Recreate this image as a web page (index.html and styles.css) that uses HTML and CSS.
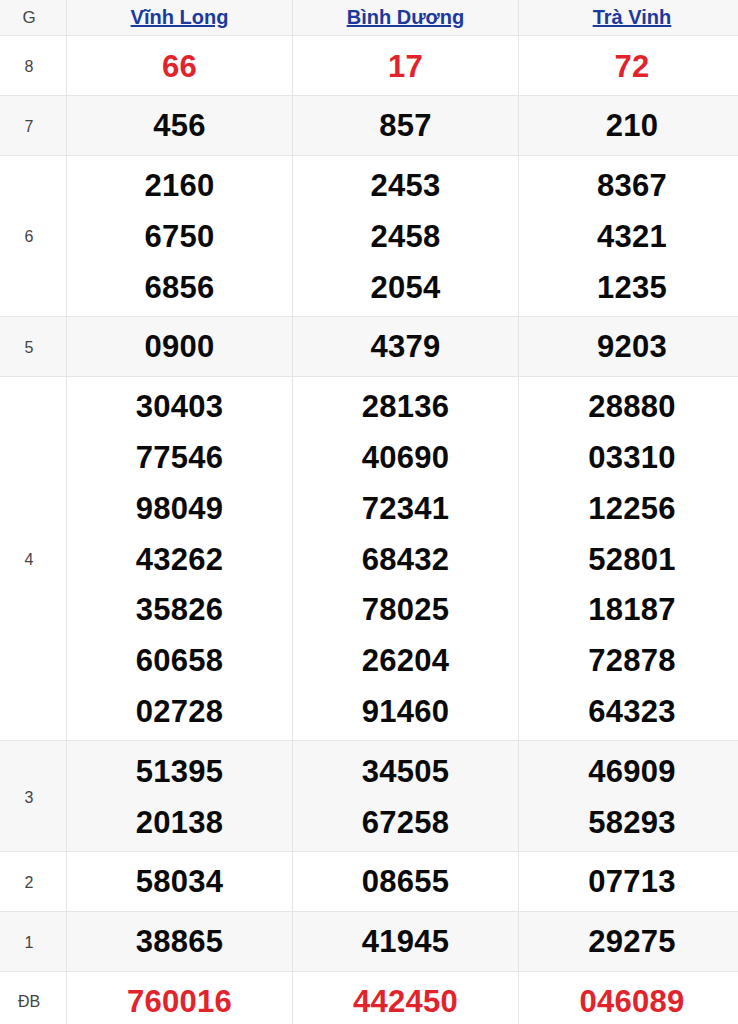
FILE: index.html
```html
<!DOCTYPE html>
<html lang="vi">
<head>
<meta charset="utf-8">
<title>Kết quả xổ số</title>
<link rel="stylesheet" href="styles.css">
</head>
<body>
<div class="board">
  <div class="row head">
    <div class="lbl">G</div>
    <div class="cell"><a href="#">Vĩnh Long</a></div>
    <div class="cell"><a href="#">Bình Dương</a></div>
    <div class="cell last"><a href="#">Trà Vinh</a></div>
  </div>
  <div class="row">
    <div class="lbl">8</div>
    <div class="cell red"><span>66</span></div>
    <div class="cell red"><span>17</span></div>
    <div class="cell red last"><span>72</span></div>
  </div>
  <div class="row alt">
    <div class="lbl">7</div>
    <div class="cell"><span>456</span></div>
    <div class="cell"><span>857</span></div>
    <div class="cell last"><span>210</span></div>
  </div>
  <div class="row">
    <div class="lbl">6</div>
    <div class="cell"><span>2160</span><span>6750</span><span>6856</span></div>
    <div class="cell"><span>2453</span><span>2458</span><span>2054</span></div>
    <div class="cell last"><span>8367</span><span>4321</span><span>1235</span></div>
  </div>
  <div class="row alt">
    <div class="lbl">5</div>
    <div class="cell"><span>0900</span></div>
    <div class="cell"><span>4379</span></div>
    <div class="cell last"><span>9203</span></div>
  </div>
  <div class="row">
    <div class="lbl">4</div>
    <div class="cell"><span>30403</span><span>77546</span><span>98049</span><span>43262</span><span>35826</span><span>60658</span><span>02728</span></div>
    <div class="cell"><span>28136</span><span>40690</span><span>72341</span><span>68432</span><span>78025</span><span>26204</span><span>91460</span></div>
    <div class="cell last"><span>28880</span><span>03310</span><span>12256</span><span>52801</span><span>18187</span><span>72878</span><span>64323</span></div>
  </div>
  <div class="row alt">
    <div class="lbl">3</div>
    <div class="cell"><span>51395</span><span>20138</span></div>
    <div class="cell"><span>34505</span><span>67258</span></div>
    <div class="cell last"><span>46909</span><span>58293</span></div>
  </div>
  <div class="row">
    <div class="lbl">2</div>
    <div class="cell"><span>58034</span></div>
    <div class="cell"><span>08655</span></div>
    <div class="cell last"><span>07713</span></div>
  </div>
  <div class="row alt">
    <div class="lbl">1</div>
    <div class="cell"><span>38865</span></div>
    <div class="cell"><span>41945</span></div>
    <div class="cell last"><span>29275</span></div>
  </div>
  <div class="row">
    <div class="lbl">ĐB</div>
    <div class="cell red"><span>760016</span></div>
    <div class="cell red"><span>442450</span></div>
    <div class="cell red last"><span>046089</span></div>
  </div>
</div>
</body>
</html>
```

FILE: styles.css
```css
html, body {
  margin: 0;
  padding: 0;
  background: #ffffff;
  overflow: hidden;
}
body {
  font-family: "Liberation Sans", Arial, sans-serif;
  color: #111;
  width: 738px;
}
.board {
  display: flex;
  flex-direction: column;
}
.row {
  display: grid;
  grid-template-columns: 67px 226px 226px 219px;
  border-bottom: 1px solid #e5e5e5;
  background: #ffffff;
}
.row.alt, .row.head {
  background: #f7f7f7;
}
.lbl {
  display: flex;
  align-items: center;
  justify-content: center;
  padding: 3px 8px 0 0;
  font-size: 16px;
  color: #444;
  border-right: 1px solid #e5e5e5;
}
.cell {
  display: flex;
  flex-direction: column;
  align-items: center;
  justify-content: center;
  padding: 5.5px 0 2.5px 0;
  border-right: 1px solid #e5e5e5;
}
.cell.last {
  border-right: none;
  padding-left: 7px;
}
.cell span {
  display: block;
  font-size: 31px;
  font-weight: bold;
  line-height: 50.8px;
  color: #0a0a0a;
  letter-spacing: 0.3px;
}
.cell.red span {
  color: #e3232b;
}
.head {
  height: 35px;
}
.head .lbl {
  font-size: 17px;
  padding-top: 0;
}
.head .cell {
  padding: 0;
}
.head .cell.last {
  padding-left: 7px;
}
.head .cell a {
  font-size: 20px;
  font-weight: bold;
  color: #1c3a9e;
  text-decoration: underline;
  line-height: 35px;
}
```
